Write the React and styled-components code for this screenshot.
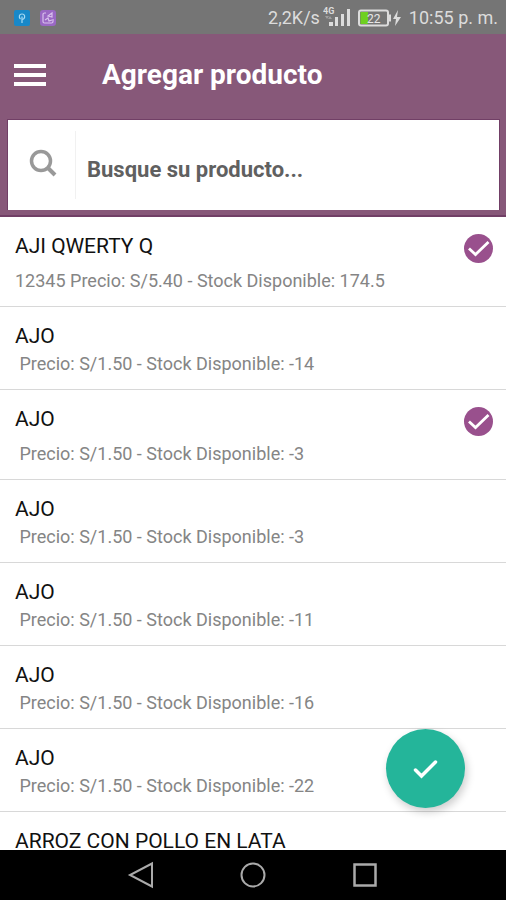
import React, { useState } from "react";
import styled, { createGlobalStyle } from "styled-components";

const GlobalStyle = createGlobalStyle`
  * {
    box-sizing: border-box;
  }
  body {
    margin: 0;
    background: #fff;
    font-family: Roboto, "Liberation Sans", sans-serif;
  }
`;

const Screen = styled.div`
  display: flex;
  flex-direction: column;
  height: 100vh;
  overflow: hidden;
`;

// Phone status bar
const StatusBar = styled.div`
  display: flex;
  align-items: center;
  justify-content: space-between;
  flex: none;
  height: 34px;
  padding: 2px 8px 0 14px;
  background: #757575;
  color: #dcdcdc;
  font-size: 18px;
  line-height: 24px;
`;

const StatusGroup = styled.div`
  display: flex;
  align-items: center;
  gap: ${(props) => props.$gap}px;
  svg {
    display: block;
  }
`;

// Purple header with title and search
const Header = styled.header`
  flex: none;
  padding: 0 6px 5px 7px;
  background: #875879;
  border-bottom: 2px solid #713f66;
`;

const TitleRow = styled.div`
  display: flex;
  align-items: center;
  gap: 56px;
  height: 85px;
  padding: 0 7px 4px;
`;

const MenuButton = styled.button`
  display: flex;
  padding: 0;
  border: 0;
  background: none;
  cursor: pointer;
`;

const Title = styled.h1`
  margin: 0;
  color: #fff;
  font-size: 28px;
  font-weight: 700;
  line-height: 32px;
`;

const SearchBox = styled.label`
  display: flex;
  align-items: center;
  height: 91px;
  border: 1px solid #713f66;
  border-bottom: 0;
  background: #fff;
`;

const SearchIcon = styled.span`
  display: flex;
  align-items: center;
  height: 68px;
  padding: 0 18px 4px 21px;
  border-right: 1px solid #f1f1f1;
`;

const SearchInput = styled.input`
  flex: 1;
  min-width: 0;
  padding: 10px 11px 0;
  border: 0;
  outline: 0;
  background: none;
  color: #555;
  font: 700 22px/32px Roboto, "Liberation Sans", sans-serif;
  &::placeholder {
    color: #606060;
    opacity: 1;
  }
`;

// Product list
const Main = styled.main`
  position: relative;
  flex: 1;
  min-height: 0;
`;

const ProductList = styled.ul`
  height: 100%;
  margin: 0;
  padding: 0;
  overflow-y: auto;
  scrollbar-width: none;
  list-style: none;
`;

const ProductRow = styled.label`
  position: relative;
  display: flex;
  flex-direction: column;
  gap: 4px;
  padding: 17px 13px 13px 15px;
  border-bottom: 1px solid #d8d8d8;
  cursor: pointer;
`;

const ProductTop = styled.span`
  display: flex;
  align-items: flex-start;
  justify-content: space-between;
  svg {
    display: block;
    margin-bottom: 2px;
  }
`;

const ProductName = styled.span`
  color: #111;
  font-size: 21px;
  line-height: 24px;
`;

const ProductMeta = styled.span`
  color: #858585;
  font-size: 18px;
  line-height: 24px;
  white-space: pre;
`;

const HiddenCheckbox = styled.input`
  position: absolute;
  width: 1px;
  height: 1px;
  margin: 0;
  opacity: 0;
`;

const ConfirmButton = styled.button`
  position: absolute;
  right: 41px;
  bottom: 42px;
  display: flex;
  align-items: center;
  justify-content: center;
  width: 79px;
  height: 79px;
  padding: 0;
  border: 0;
  border-radius: 50%;
  background: #24b59a;
  box-shadow: 2px 4px 8px rgba(0, 0, 0, 0.2);
  cursor: pointer;
`;

// Android navigation buttons
const NavBar = styled.nav`
  display: flex;
  align-items: center;
  justify-content: center;
  gap: 84px;
  flex: none;
  height: 50px;
  background: #000;
`;

const NavButton = styled.button`
  display: flex;
  padding: 0;
  border: 0;
  background: none;
`;

const products = [
  { name: "AJI QWERTY Q", code: "12345", price: "5.40", stock: "174.5" },
  { name: "AJO", code: "", price: "1.50", stock: "-14" },
  { name: "AJO", code: "", price: "1.50", stock: "-3" },
  { name: "AJO", code: "", price: "1.50", stock: "-3" },
  { name: "AJO", code: "", price: "1.50", stock: "-11" },
  { name: "AJO", code: "", price: "1.50", stock: "-16" },
  { name: "AJO", code: "", price: "1.50", stock: "-22" },
  { name: "ARROZ CON POLLO EN LATA" },
];

const CheckCircle = () => (
  <svg width="29" height="29" viewBox="0 0 29 29">
    <circle cx="14.5" cy="14.5" r="14.5" fill="#99508d" />
    <path
      d="M5 14.5l6.500 6L24.500 8"
      fill="none"
      stroke="#fff"
      strokeWidth="2.8"
    />
  </svg>
);

const SignalIcon = () => (
  <svg width="28" height="24" viewBox="0 0 28 24" fill="#dcdcdc">
    <text x="0" y="8" fontSize="9" fontWeight="700">
      4G
    </text>
    <path d="M2 10l2 3 2-3zM5 13l2-3 2 3z" opacity="0.4" />
    <rect x="6" y="16" width="4" height="4" />
    <rect x="12" y="11" width="3" height="9" />
    <rect x="18" y="8" width="3" height="12" />
    <rect x="24" y="3" width="3" height="17" />
  </svg>
);

const BatteryIcon = () => (
  <svg width="44" height="18" viewBox="0 0 44 18">
    <rect
      x="1"
      y="1.5"
      width="29"
      height="15"
      rx="2"
      fill="none"
      stroke="#dcdcdc"
      strokeWidth="2"
    />
    <rect x="2.5" y="3" width="7.5" height="12" fill="#6fd020" />
    <path d="M31 5.5h2v7h-2z" fill="#dcdcdc" />
    <text x="9" y="13.5" fontSize="12" fill="#e6e6e6">
      22
    </text>
    <path d="M40 1l-5 9h3l-1 7 6-9h-4z" fill="#dcdcdc" />
  </svg>
);

const App = () => {
  const [selected, setSelected] = useState([0, 2]);

  const toggle = (index) =>
    setSelected((current) =>
      current.includes(index)
        ? current.filter((item) => item !== index)
        : [...current, index],
    );

  return (
    <Screen>
      <GlobalStyle />
      <StatusBar>
        <StatusGroup $gap={10}>
          <svg width="16" height="16" viewBox="0 0 16 16" fill="none">
            <rect width="16" height="16" rx="2" fill="#1888c8" />
            <path
              d="M6.500 9C4.500 7.500 5 4 8 4s3.500 3.500 1.500 5L8 9.500V13M8 6.500v3"
              stroke="#a9dcf5"
              strokeWidth="1.200"
            />
          </svg>
          <svg width="16" height="16" viewBox="0 0 16 16" fill="none">
            <rect width="16" height="16" rx="3" fill="#9a68c4" />
            <path
              d="M6 3H4.500A1.500 1.500 0 003 4.500v7A1.500 1.500 0 004.500 13h7a1.500 1.500 0 001.500-1.500V9M5 10l3-2 1 3 3-1M8 6l4-3v4z"
              stroke="#d9c2ee"
              strokeWidth="1.200"
            />
          </svg>
        </StatusGroup>
        <StatusGroup $gap={7}>
          <StatusGroup $gap={3}>
            <span>2,2K/s</span>
            <SignalIcon />
          </StatusGroup>
          <BatteryIcon />
          <span>10:55 p. m.</span>
        </StatusGroup>
      </StatusBar>

      <Header>
        <TitleRow>
          <MenuButton aria-label="Menú">
            <svg width="32" height="22" viewBox="0 0 32 22" fill="#fff">
              <rect width="32" height="4" />
              <rect y="9" width="32" height="4" />
              <rect y="18" width="32" height="4" />
            </svg>
          </MenuButton>
          <Title>Agregar producto</Title>
        </TitleRow>
        <SearchBox>
          <SearchIcon>
            <svg
              width="28"
              height="28"
              viewBox="0 0 28 28"
              fill="none"
              stroke="#999"
            >
              <circle cx="12" cy="12" r="9.500" strokeWidth="3.500" />
              <path d="M18.500 18.500l7.500 7.500" strokeWidth="4" />
            </svg>
          </SearchIcon>
          <SearchInput
            type="text"
            aria-label="Buscar producto"
            placeholder="Busque su producto..."
          />
        </SearchBox>
      </Header>

      <Main>
        <ProductList>
          {products.map((product, index) => (
            <li key={index}>
              <ProductRow>
                <ProductTop>
                  <ProductName>{product.name}</ProductName>
                  <HiddenCheckbox
                    type="checkbox"
                    checked={selected.includes(index)}
                    onChange={() => toggle(index)}
                  />
                  {selected.includes(index) && <CheckCircle />}
                </ProductTop>
                {product.price && (
                  <ProductMeta>
                    {`${product.code} Precio: S/${product.price} - Stock Disponible: ${product.stock}`}
                  </ProductMeta>
                )}
              </ProductRow>
            </li>
          ))}
        </ProductList>
        <ConfirmButton aria-label="Confirmar">
          <svg width="26" height="20" viewBox="0 0 26 20">
            <path
              d="M2.500 11l6 6L22.500 3"
              fill="none"
              stroke="#fff"
              strokeWidth="3.500"
              strokeLinecap="round"
            />
          </svg>
        </ConfirmButton>
      </Main>

      <NavBar>
        <NavButton aria-label="Atrás">
          <svg width="28" height="28" viewBox="0 0 28 28">
            <path
              d="M25 2.500v23L3 14z"
              fill="none"
              stroke="#aaa"
              strokeWidth="2"
            />
          </svg>
        </NavButton>
        <NavButton aria-label="Inicio">
          <svg width="28" height="28" viewBox="0 0 28 28">
            <circle
              cx="14"
              cy="14"
              r="11.500"
              fill="none"
              stroke="#aaa"
              strokeWidth="2"
            />
          </svg>
        </NavButton>
        <NavButton aria-label="Recientes">
          <svg width="28" height="28" viewBox="0 0 28 28">
            <rect
              x="3.500"
              y="3.500"
              width="21"
              height="21"
              fill="none"
              stroke="#aaa"
              strokeWidth="2.500"
            />
          </svg>
        </NavButton>
      </NavBar>
    </Screen>
  );
};

export default App;
